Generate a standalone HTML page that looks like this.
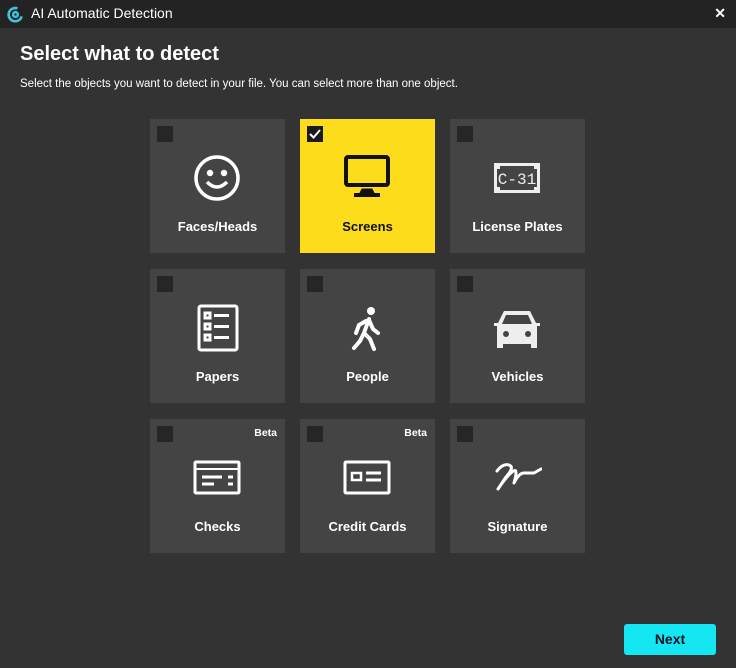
<!DOCTYPE html>
<html><head><style>
*{margin:0;padding:0;box-sizing:border-box}
body{width:736px;height:668px;background:#333333;font-family:"Liberation Sans",sans-serif;position:relative;overflow:hidden;color:#fff}
.tb{position:absolute;left:0;top:0;width:736px;height:28px;background:#232323}
.tb .t{position:absolute;left:31px;top:5px;font-size:14px;color:#fff}
.tb .x{position:absolute;right:10px;top:5px;font-size:14px;font-weight:bold}
h1{position:absolute;left:20px;top:43px;font-size:20px;font-weight:bold}
.sub{position:absolute;left:20px;top:78px;font-size:11.5px}
.tile{position:absolute;width:135px;height:134px;background:#444}
.tile .cb{position:absolute;left:7px;top:7px;width:16px;height:16px;background:#262626}
.tile .lb{position:absolute;left:0;width:100%;top:100px;text-align:center;font-size:13px;font-weight:bold}
.tile svg{position:absolute;left:42px;top:34px}
.beta{position:absolute;right:8px;top:8px;font-size:10.5px;font-weight:bold}
.y{background:#fcdc1b;color:#111}
.next{position:absolute;left:624px;top:624px;width:92px;height:31px;background:#14e6f2;border-radius:3px;color:#112;font-weight:bold;font-size:14px;text-align:center;line-height:31px}
</style></head><body>
<div class="tb">
<svg style="position:absolute;left:6px;top:5px" width="19" height="19" viewBox="0 0 20 20" fill="none" stroke="#3cc4dc" stroke-width="2.6"><path d="M12 3.5A7 7 0 1 0 16.5 12"/><path d="M8 16.5A7 7 0 1 0 3.5 8" transform="rotate(180 10 10)"/><circle cx="10" cy="10" r="2.5"/></svg>
<div class="t">AI Automatic Detection</div><div class="x">✕</div></div>
<h1>Select what to detect</h1>
<div class="sub">Select the objects you want to detect in your file. You can select more than one object.</div>

<div class="tile" style="left:150px;top:119px"><div class="cb"></div>
<svg width="50" height="50" viewBox="0 0 50 50" fill="none" stroke="#fff" stroke-width="3.5"><circle cx="25" cy="25" r="21"/><circle cx="18" cy="20" r="1.5" fill="#fff"/><circle cx="32" cy="20" r="1.5" fill="#fff"/><path d="M15 29q10 10 20 0"/></svg>
<div class="lb">Faces/Heads</div></div>

<div class="tile y" style="left:300px;top:119px"><div class="cb" style="background:#1a1a1a"><svg style="left:2px;top:2px" width="12" height="12" viewBox="0 0 12 12" fill="none" stroke="#fff" stroke-width="2"><path d="M1 6l3.5 3.5L11 2"/></svg></div>
<svg width="50" height="50" viewBox="0 0 50 50" fill="none" stroke="#111" stroke-width="4"><rect x="4" y="4" width="42" height="28" rx="2"/><path d="M20 36h10l2 4H18z" fill="#111" stroke-width="1"/><path d="M12 42h26"/></svg>
<div class="lb" style="color:#111">Screens</div></div>

<div class="tile" style="left:450px;top:119px"><div class="cb"></div>
<svg width="50" height="50" viewBox="0 0 50 50"><path d="M2 10h46v30H2z" fill="#eee"/><path d="M5 13h40v24H5z" fill="#444"/><path d="M5 13h3v3H5zM42 13h3v3h-3zM5 34h3v3H5zM42 34h3v3h-3z" fill="#eee"/><text x="25" y="31" text-anchor="middle" font-family="Liberation Mono" font-size="16" fill="#eee">C-31</text></svg>
<div class="lb">License Plates</div></div>

<div class="tile" style="left:150px;top:269px"><div class="cb"></div>
<svg width="50" height="50" viewBox="0 0 50 50" fill="none" stroke="#fff" stroke-width="3"><rect x="7" y="3" width="38" height="44" rx="2"/><rect x="13" y="10" width="5" height="5"/><rect x="13" y="21" width="5" height="5"/><rect x="13" y="32" width="5" height="5"/><path d="M22 12.5h15M22 23.5h15M22 34.5h15"/></svg>
<div class="lb">Papers</div></div>

<div class="tile" style="left:300px;top:269px"><div class="cb"></div>
<svg width="50" height="50" viewBox="0 0 50 50" fill="none" stroke="#fff" stroke-width="4" stroke-linecap="round"><circle cx="29" cy="8" r="4" fill="#fff" stroke="none"/><path d="M27 16l-5 14 6 6 4 10M22 30l-4 8-6 7M24 18l-7 4-3 8M27 17l4 9 5 4"/></svg>
<div class="lb">People</div></div>

<div class="tile" style="left:450px;top:269px"><div class="cb"></div>
<svg width="50" height="50" viewBox="0 0 50 50"><path d="M12 8h26l6 12h4v3h-3v22h-6v-4H11v4H5V23H2v-3h4z" fill="#eee"/><path d="M14 12h22l4 9H10z" fill="#444"/><circle cx="14" cy="31" r="3" fill="#444"/><circle cx="36" cy="31" r="3" fill="#444"/></svg>
<div class="lb">Vehicles</div></div>

<div class="tile" style="left:150px;top:419px"><div class="cb"></div><div class="beta">Beta</div>
<svg width="50" height="50" viewBox="0 0 50 50" fill="none" stroke="#fff" stroke-width="3"><rect x="3" y="9" width="44" height="31" rx="1"/><path d="M3 16h44" stroke-width="2"/><path d="M10 24h20M10 31h12M36 24h5M36 31h5"/></svg>
<div class="lb">Checks</div></div>

<div class="tile" style="left:300px;top:419px"><div class="cb"></div><div class="beta">Beta</div>
<svg width="50" height="50" viewBox="0 0 50 50" fill="none" stroke="#fff" stroke-width="3"><rect x="3" y="9" width="44" height="31" rx="1"/><rect x="10" y="20" width="9" height="7" stroke-width="2.5"/><path d="M24 20h15M24 27h15"/></svg>
<div class="lb">Credit Cards</div></div>

<div class="tile" style="left:450px;top:419px"><div class="cb"></div>
<svg width="50" height="50" viewBox="0 0 50 50" fill="none" stroke="#fff" stroke-width="3" stroke-linecap="round" stroke-linejoin="round"><path d="M5 18q6-8 12-6t-3 12l-8 12q8-12 14-17t3 7l-1 4q5-10 10-10t10 0l7-4"/></svg>
<div class="lb">Signature</div></div>

<div class="next">Next</div>
</body></html>
